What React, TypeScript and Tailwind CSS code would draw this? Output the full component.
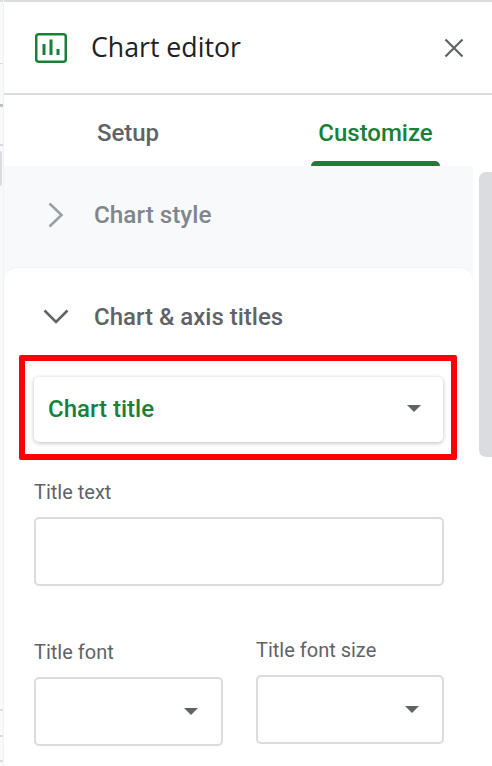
function Caret() {
  return (
    <svg width="14" height="7" viewBox="0 0 14 7" className="block">
      <path d="M0 0h14L7 7z" fill="#5f6368" />
    </svg>
  );
}

function ChartIcon() {
  return (
    <svg width="32" height="30" viewBox="0 0 32 30" className="block" fill="none">
      <rect x="1.25" y="1.25" width="29.5" height="27.5" rx="2.5" stroke="#188038" strokeWidth="2.5" />
      <rect x="7.5" y="11" width="3" height="11" fill="#188038" />
      <rect x="14.5" y="6.5" width="3" height="15.5" fill="#188038" />
      <rect x="21.5" y="16" width="3" height="6" fill="#188038" />
    </svg>
  );
}

function Select({ width, caretRight }: { width: string; caretRight: string }) {
  return (
    <div className={`${width} ${caretRight} h-[69px] rounded-[5px] border-2 border-[#dadce0] bg-white flex items-center justify-end`}>
      <Caret />
    </div>
  );
}

export default function App() {
  return (
    <div className="relative h-[766px] w-[492px] overflow-hidden bg-white font-['Roboto',sans-serif]">
      <div className="flex h-full">
        {/* sliver of the sheet behind the panel */}
        <div className="w-[3px] shrink-0 bg-[#f8f9fa]">
          <div className="h-[2px] bg-[#dadce0]" />
          <div className="mt-[61px] h-px bg-[#dadce0]" />
          <div className="mt-[40px] h-[3px] bg-[#bdc1c6]" />
          <div className="mt-[37px] h-[2px] bg-[#dadce0]" />
          <div className="mt-[5px] h-[35px] w-[2px] rounded-r bg-[#dadce0]" />
          <div className="mt-[523px] h-[2px] bg-[#dadce0]" />
          <div className="mt-[24px] h-[2px] bg-[#dadce0]" />
          <div className="mt-[23px] h-[2px] bg-[#dadce0]" />
        </div>

        <div className="flex min-w-0 flex-1 flex-col border-l border-[#f1f3f4]">
          <div className="border-t-[2px] border-b-[2px] border-t-[#dadce0] border-b-[#dadce0] h-[95px] flex items-center pl-[31px] pr-[28px]">
            <ChartIcon />
            <span className="ml-[24px] flex-1 text-[26.7px] leading-none text-[#202124] font-['Open_Sans',sans-serif]">Chart editor</span>
            <svg width="20" height="20" viewBox="0 0 20 20" fill="none" className="block">
              <path d="M1.5 1.5l17 17M18.5 1.5l-17 17" stroke="#5f6368" strokeWidth="2.2" />
            </svg>
          </div>

          <div className="flex h-[71px] pr-[6px]">
            <div className="flex w-[248px] justify-center pt-[22px]">
              <span className="text-[24px] leading-[32px] font-medium text-[#5f6368]">Setup</span>
            </div>
            <div className="ml-[59px] flex w-[129px] flex-col items-center pt-[22px]">
              <span className="text-[24px] leading-[32px] font-medium text-[#188038]">Customize</span>
              <div className="mt-auto h-[5px] w-full rounded-t-[5px] bg-[#188038]" />
            </div>
          </div>

          <div className="flex flex-1 min-h-0">
            <div className="w-[469px] shrink-0 bg-[#f8f9fa]">
              <div className="flex h-[101px] items-center pb-[3px] pl-[44px]">
                <svg width="16" height="26" viewBox="0 0 16 26" fill="none" className="block">
                  <path d="M1.5 1.5L13.5 13 1.5 24.5" stroke="#9aa0a6" strokeWidth="2.6" />
                </svg>
                <span className="ml-[30px] text-[24.3px] leading-none font-medium text-[#80868b]">Chart style</span>
              </div>

              <div className="h-full rounded-t-[14px] border-t border-[#f1f3f4] bg-white pt-[34px]">
                <div className="flex h-[30px] items-center pl-[39px]">
                  <svg width="26" height="16" viewBox="0 0 26 16" fill="none" className="block">
                    <path d="M1.5 1.5L13 13 24.5 1.5" stroke="#5f6368" strokeWidth="2.6" />
                  </svg>
                  <span className="ml-[25px] text-[24px] leading-none font-medium text-[#5f6368]">Chart &amp; axis titles</span>
                </div>

                <div className="ml-[15px] mt-[23px] h-[105px] w-[438px] rounded-[2px] border-[6px] border-[#ff0000] pl-[9px] pr-[8px] pt-[16px]">
                  <div className="flex h-[65px] items-center justify-between rounded-[5px] bg-white pb-[2px] pl-[14px] pr-[22px] shadow-[0_1px_4px_rgba(60,64,67,0.35)]">
                    <span className="text-[24px] leading-none font-medium text-[#188038]">Chart title</span>
                    <Caret />
                  </div>
                </div>

                <div className="pl-[30px]">
                  <div className="mt-[20px] text-[20px] leading-[24px] text-[#5f6368]">Title text</div>
                  <div className="mt-[13px] h-[69px] w-[410px] rounded-[5px] border-2 border-[#dadce0]" />

                  <div className="mt-[52px] flex items-start">
                    <div className="w-[222px]">
                      <div className="mt-[2px] text-[20px] leading-[24px] text-[#5f6368]">Title font</div>
                      <div className="mt-[13px]">
                        <Select width="w-[189px]" caretRight="pr-[23px]" />
                      </div>
                    </div>
                    <div>
                      <div className="text-[20px] leading-[24px] text-[#5f6368]">Title font size</div>
                      <div className="mt-[13px]">
                        <Select width="w-[188px]" caretRight="pr-[23px]" />
                      </div>
                    </div>
                  </div>
                </div>
              </div>
            </div>

            <div className="ml-[6px] mt-[6px] h-[285px] w-[13px] rounded-l-[7px] bg-[#dadce0]" />
          </div>
        </div>
      </div>
    </div>
  );
}
